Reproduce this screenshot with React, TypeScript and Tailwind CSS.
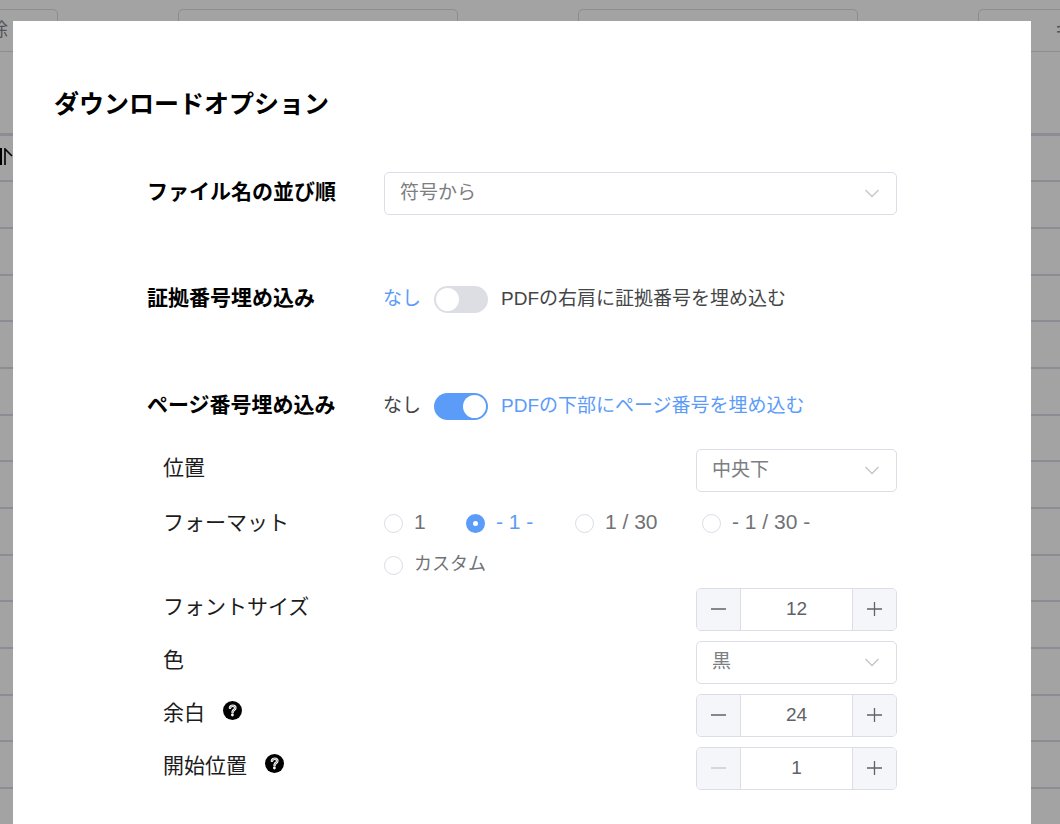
import React, { useState } from 'react';

const tableRows = Array.from({ length: 15 }, (_, i) => i);

const formats = [
  { value: 'n', label: '1', width: 'w-[82px]' },
  { value: 'dash', label: '- 1 -', width: 'w-[109px]' },
  { value: 'total', label: '1 / 30', width: 'w-[127px]' },
  { value: 'dashTotal', label: '- 1 / 30 -', width: 'w-[130px]' },
];

function HelpIcon() {
  return (
    <svg className="size-[19px]" viewBox="0 0 19 19" fill="none" strokeLinecap="round" strokeLinejoin="round">
      <circle cx="9.5" cy="9.5" r="9.5" fill="#000" />
      <path d="M7 6.8C7.3 5.3 8.4 4.7 9.8 4.7c1.500 0 2.500.9 2.500 2.200 0 1.900-2.500 2-2.700 4.300" stroke="#fff" strokeWidth="2.600" />
      <path d="M7 6.8C7.3 5.3 8.4 4.7 9.8 4.7c1.500 0 2.500.9 2.500 2.200 0 1.900-2.500 2-2.700 4.300" stroke="#777" strokeWidth="0.800" />
      <circle cx="9.4" cy="14" r="1.400" fill="#fff" />
    </svg>
  );
}

function Select({ id, options }: { id: string; options: string[] }) {
  return (
    <div className="relative w-full">
      <select
        id={id}
        className="block h-[43px] w-full appearance-none rounded-[5px] border border-[#dcdde6] bg-white pl-[15px] pr-10 text-[19px] text-[#7c7e82] outline-none"
      >
        {options.map((o) => (
          <option key={o}>{o}</option>
        ))}
      </select>
      <svg className="pointer-events-none absolute right-[18px] top-[17px] h-[9px] w-[14px]" viewBox="0 0 14 9" fill="none" stroke="#c3c5ca" strokeWidth="1.3">
        <path d="M0.5 1l6.5 6.5L13.5 1" />
      </svg>
    </div>
  );
}

function Stepper({ id, initial, min }: { id: string; initial: number; min: number }) {
  const [value, setValue] = useState(initial);
  return (
    <div className="flex h-[43px] w-full overflow-hidden rounded-[5px] border border-[#dcdde6] bg-white">
      <button
        type="button"
        aria-label="減らす"
        disabled={value <= min}
        onClick={() => setValue(value - 1)}
        className="flex w-11 shrink-0 items-center justify-center border-r border-[#dcdde6] bg-[#f5f6fa] text-[#606266] disabled:text-[#c0c4cc]"
      >
        <svg className="size-[15px]" viewBox="0 0 15 15" stroke="currentColor" strokeWidth="1.3">
          <path d="M0 7h15" />
        </svg>
      </button>
      <input
        id={id}
        inputMode="numeric"
        value={value}
        onChange={(e) => setValue(Number(e.target.value) || min)}
        className="min-w-0 flex-1 text-center text-[19px] text-[#606266] outline-none"
      />
      <button
        type="button"
        aria-label="増やす"
        onClick={() => setValue(value + 1)}
        className="flex w-11 shrink-0 items-center justify-center border-l border-[#dcdde6] bg-[#f5f6fa] text-[#606266]"
      >
        <svg className="size-[15px]" viewBox="0 0 15 15" stroke="currentColor" strokeWidth="1.3">
          <path d="M0 7h15M7.5 0v14" />
        </svg>
      </button>
    </div>
  );
}

function SwitchRow({ id, title, on, initial }: { id: string; title: string; on: string; initial: boolean }) {
  const [checked, setChecked] = useState(initial);
  return (
    <div className="flex h-[42px] items-center pb-[2px]">
      <h2 className="w-[236px] shrink-0 pb-[2px] text-[21px] font-bold">{title}</h2>
      <span className={`w-[51px] shrink-0 text-[19px] ${checked ? 'text-[#444547]' : 'text-[#5b9cf8]'}`}>なし</span>
      <input
        id={id}
        type="checkbox"
        role="switch"
        checked={checked}
        onChange={(e) => setChecked(e.target.checked)}
        className="h-[27px] w-[54px] shrink-0 appearance-none rounded-full bg-[#dddee4] p-[2px] before:block before:size-[23px] before:rounded-full before:bg-white checked:bg-[#5b9cf8] checked:before:ml-[27px]"
      />
      <label htmlFor={id} className={`ml-[13px] text-[19px] ${checked ? 'text-[#5b9cf8]' : 'text-[#444547]'}`}>
        {on}
      </label>
    </div>
  );
}

function OptionRow({ id, label, help, children }: { id: string; label: string; help?: boolean; children: React.ReactNode }) {
  return (
    <div className="flex h-[42px] items-center justify-between">
      <div className="flex items-center gap-[18px] pb-[5px]">
        <label htmlFor={id} className="text-[21px] text-[#1c1c1c]">{label}</label>
        {help && (
          <button type="button" aria-label={`${label}の説明`} className="pb-1">
            <HelpIcon />
          </button>
        )}
      </div>
      <div className="w-[201px]">{children}</div>
    </div>
  );
}

function FormatRadio({ value, label, width, current, onChange }: { value: string; label: string; width: string; current: string; onChange: (v: string) => void }) {
  const active = current === value;
  return (
    <label className={`flex h-[42px] items-center gap-[11px] ${width} ${active ? 'text-[#5b9cf8]' : 'text-[#707276]'}`}>
      <input
        type="radio"
        name="format"
        checked={active}
        onChange={() => onChange(value)}
        className="size-[19px] shrink-0 appearance-none rounded-full border border-[#dcdde6] bg-white checked:border-[7px] checked:border-[#5b9cf8]"
      />
      <span className="whitespace-nowrap pb-[2px]">{label}</span>
    </label>
  );
}

function BackgroundPage() {
  return (
    <div className="h-full overflow-hidden" aria-hidden="true">
      <div className="flex justify-end overflow-hidden pt-[9px] text-[18px] text-[#85878b]">
        <div className="-mr-[198px] flex gap-[120px]">
          <div className="flex h-[43px] w-[280px] items-center justify-end rounded-[5px] border border-[#dcdde6] pr-[49px]">削除</div>
          <div className="h-[43px] w-[280px] rounded-[5px] border border-[#dcdde6]" />
          <div className="h-[43px] w-[280px] rounded-[5px] border border-[#dcdde6]" />
          <div className="flex h-[43px] w-[280px] items-center rounded-[5px] border border-[#dcdde6] pl-[76px]">キ</div>
        </div>
      </div>
      <div className="mt-[81px] border-t-[3px] border-[#dcdce9]">
        {tableRows.map((i) => (
          <div key={i} className="h-[47px] border-b-2 border-[#dcdce9] nth-[3n+1]:h-[46px]">
            {i === 0 && (
              <div className="pt-3">
                <svg className="h-[18px] w-[13px]" viewBox="0 0 13 18" fill="none" stroke="#000">
                  <path d="M1 0v17" strokeWidth="2" />
                  <path d="M5 17V1l7 7" strokeWidth="1.600" />
                </svg>
              </div>
            )}
          </div>
        ))}
      </div>
    </div>
  );
}

export default function App() {
  const [format, setFormat] = useState('dash');

  return (
    <div className="relative h-screen overflow-hidden bg-white font-['Liberation_Sans','Noto_Sans_CJK_JP',sans-serif] text-black">
      <BackgroundPage />

      {/* Overlay */}
      <div className="absolute inset-0 overflow-hidden bg-black/36 pl-[13px] pr-[29px] pt-[21px]">
        <div role="dialog" aria-labelledby="dialog-title" className="min-h-full bg-white px-[41px] pt-[66px]">
          <h1 id="dialog-title" className="text-[25px] leading-[34px] font-bold">ダウンロードオプション</h1>

          <form className="mt-[51px] px-[93px]" onSubmit={(e) => e.preventDefault()}>
            <div className="flex flex-col gap-[65px]">
              <div className="flex h-[42px] items-center">
                <label htmlFor="order" className="w-[237px] shrink-0 pb-[2px] text-[21px] font-bold">ファイル名の並び順</label>
                <Select id="order" options={['符号から', 'ファイル名から']} />
              </div>
              <SwitchRow id="evidence" title="証拠番号埋め込み" on="PDFの右肩に証拠番号を埋め込む" initial={false} />
              <SwitchRow id="page" title="ページ番号埋め込み" on="PDFの下部にページ番号を埋め込む" initial={true} />
            </div>

            <div className="mt-[21px] flex flex-col gap-[11px] pl-4">
              <OptionRow id="position" label="位置">
                <Select id="position" options={['中央下', '右下', '左下']} />
              </OptionRow>

              <fieldset className="flex">
                <legend className="float-left w-[221px] shrink-0 text-[21px] leading-[42px] text-[#1c1c1c]">フォーマット</legend>
                <div className="flex flex-1 flex-wrap text-[21px]">
                  {formats.map((f) => (
                    <FormatRadio key={f.value} {...f} current={format} onChange={setFormat} />
                  ))}
                  <div className="text-[18px]">
                    <FormatRadio value="custom" label="カスタム" width="w-[120px]" current={format} onChange={setFormat} />
                  </div>
                </div>
              </fieldset>

              <div className="-mt-[9px] flex flex-col gap-[11px]">
                <OptionRow id="size" label="フォントサイズ">
                  <Stepper id="size" initial={12} min={1} />
                </OptionRow>
                <OptionRow id="color" label="色">
                  <Select id="color" options={['黒', '赤', '青']} />
                </OptionRow>
                <OptionRow id="margin" label="余白" help>
                  <Stepper id="margin" initial={24} min={0} />
                </OptionRow>
                <OptionRow id="start" label="開始位置" help>
                  <Stepper id="start" initial={1} min={1} />
                </OptionRow>
              </div>
            </div>
          </form>
        </div>
      </div>
    </div>
  );
}
